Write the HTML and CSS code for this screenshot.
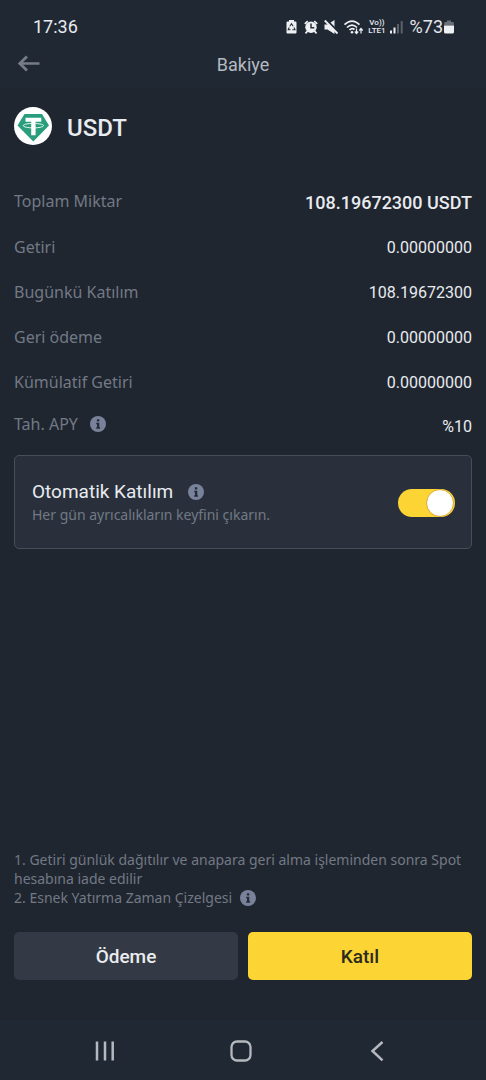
FILE: index.html
```html
<!DOCTYPE html>
<html lang="tr">
<head>
<meta charset="utf-8">
<meta name="viewport" content="width=device-width, initial-scale=1">
<title>Bakiye</title>
<link rel="stylesheet" href="styles.css">
</head>
<body>
<svg class="defs" width="0" height="0" aria-hidden="true">
  <symbol id="info" viewBox="0 0 16 16">
    <circle cx="8" cy="8" r="8" fill="#78829a"/>
    <path d="M6.900 3.300h2.400v2.200H6.900zM6.200 6.800h3.100v4.500h.8v1.500H6.200v-1.500h.8V8.200h-.8z" fill="#252c37"/>
  </symbol>
</svg>
<div class="screen">
  <div class="status">
    <span class="clock">17:36</span>
    <div class="indicators">
      <svg width="80" height="18" viewBox="0 0 80 18" aria-hidden="true">
        <path d="M4 2h5v1.500h1.500a1 1 0 0 1 1 1v10a1 1 0 0 1-1 1h-8a1 1 0 0 1-1-1v-10a1 1 0 0 1 1-1H4z" fill="#eef0f3"/>
        <path d="M4.800 8.200 6.500 5.800 8.200 8.200M9 9.500l1 2.300H7.300M5.500 11.800H3.200l1-2.300" fill="none" stroke="#28303b" stroke-width="1.100"/>
        <path d="M19.800 5.800 22.800 3.100M29.200 3.100l3 2.700M22.500 13l-2 2.300M29.500 13l2 2.300" fill="none" stroke="#eef0f3" stroke-width="1.800"/>
        <circle cx="26" cy="9.200" r="5.700" fill="#eef0f3"/>
        <path d="M26 5.500V9.800H29.300" fill="none" stroke="#28303b" stroke-width="1.500"/>
        <path d="M39.500 6.500h3L49.500 2v14l-7-4.500h-3z" fill="#eef0f3"/>
        <path d="M41 1.500 54 14.500" stroke="#202833" stroke-width="2"/>
        <path d="M39.800 2.500 52.500 15.500" stroke="#eef0f3" stroke-width="1.800"/>
        <g fill="none" stroke="#eef0f3" stroke-width="1.700">
          <path d="M59.500 6.700Q67 -.5 74.500 6.700M62 9.500Q67 4.700 72 9.500M64.500 12Q67 9.500 69.500 11.500"/>
          <path d="M71.500 10.500v5M69.800 13.500l1.700 2 1.700-2M76 15.500v-5M74.300 12.500l1.700-2 1.700 2" stroke-width="1.200"/>
        </g>
        <circle cx="67" cy="14.300" r="1.300" fill="#eef0f3"/>
      </svg>
      <span class="lte"><span>Vo))</span><span>LTE1</span></span>
      <svg width="13" height="18" viewBox="0 0 13 18" aria-hidden="true">
        <path d="M0 12.500h2v3H0zM3.500 9.500h2v6h-2z" fill="#eef0f3"/>
        <path d="M7 6h2v9.500H7zM10.700 3h2v12.500h-2z" fill="#5a616b"/>
      </svg>
      <span class="percent">%73</span>
      <svg width="10" height="18" viewBox="0 0 10 18" aria-hidden="true">
        <path d="M3 2.500h4V4h1.800a1 1 0 0 1 1 1v2.500H.2V5a1 1 0 0 1 1-1H3z" fill="#69707a"/>
        <path d="M0 7.500h10V14a1.500 1.500 0 0 1-1.500 1.500h-7A1.500 1.500 0 0 1 0 14z" fill="#eef0f3"/>
      </svg>
    </div>
  </div>
  <header class="header">
    <button class="back" type="button" aria-label="Geri">
      <svg width="22" height="18" viewBox="0 0 22 18"><path d="M21.500 8.500H2M9 1.500 1.800 8.500l7.200 7" fill="none" stroke="#777c86" stroke-width="2.700"/></svg>
    </button>
    <h1>Bakiye</h1>
  </header>
  <main class="main">
    <div class="coin">
      <svg width="38" height="38" viewBox="0 0 38 38" aria-hidden="true">
        <circle cx="19" cy="19" r="19" fill="#fff"/>
        <path d="M10.500 7h17.500L35 18.500 19.300 34.500 3.500 18.500z" fill="#2a9d7c"/>
        <path d="M11.500 10.800h15.800v4h-5.700v13.400h-4.400V14.800h-5.700z" fill="#fff"/>
        <path d="M17 16.500c-4.500.2-7.700 1-7.700 2.100 0 1.300 4.500 2.300 10.100 2.300s10.100-1 10.100-2.300c0-1.100-3.400-1.900-7.900-2.100" fill="none" stroke="#fff" stroke-width=".9"/>
      </svg>
      <h2>USDT</h2>
    </div>
    <dl class="rows">
      <div class="row total"><dt>Toplam Miktar</dt><dd>108.19672300 USDT</dd></div>
      <div class="row"><dt>Getiri</dt><dd>0.00000000</dd></div>
      <div class="row"><dt>Bugünkü Katılım</dt><dd>108.19672300</dd></div>
      <div class="row"><dt>Geri ödeme</dt><dd>0.00000000</dd></div>
      <div class="row"><dt>Kümülatif Getiri</dt><dd>0.00000000</dd></div>
      <div class="row apy"><dt>Tah. APY <svg class="info" aria-hidden="true"><use href="#info"/></svg></dt><dd>%10</dd></div>
    </dl>
    <section class="card">
      <div class="card-text">
        <label class="card-title" for="auto">Otomatik Katılım <svg class="info" aria-hidden="true"><use href="#info"/></svg></label>
        <p>Her gün ayrıcalıkların keyfini çıkarın.</p>
      </div>
      <input class="toggle" id="auto" type="checkbox" role="switch" checked>
    </section>
    <div class="notes">
      <p>1. Getiri günlük dağıtılır ve anapara geri alma işleminden sonra Spot hesabına iade edilir</p>
      <p class="note-info">2. Esnek Yatırma Zaman Çizelgesi <svg class="info" aria-hidden="true"><use href="#info"/></svg></p>
    </div>
    <div class="actions">
      <button class="secondary" type="button">Ödeme</button>
      <button class="primary" type="button">Katıl</button>
    </div>
  </main>
  <nav class="nav">
    <button type="button" aria-label="Son uygulamalar"><svg width="22" height="22" viewBox="0 0 22 22"><path d="M3 1.500v19M11 1.500v19M18.700 1.500v19" stroke="#b5b9bf" stroke-width="2.500"/></svg></button>
    <button type="button" aria-label="Ana ekran"><svg width="22" height="22" viewBox="0 0 22 22"><rect x="1.500" y="1.500" width="19" height="19" rx="5.500" fill="none" stroke="#b5b9bf" stroke-width="2.300"/></svg></button>
    <button type="button" aria-label="Geri dön"><svg width="22" height="22" viewBox="0 0 22 22"><path d="M16.500 2 6.500 11l10 9.300" fill="none" stroke="#b5b9bf" stroke-width="2.500"/></svg></button>
  </nav>
</div>
</body>
</html>
```
FILE: styles.css
```css
* {
  box-sizing: border-box;
}

body,
h1,
h2,
p,
dl,
dd {
  margin: 0;
}

body {
  background: #20262f;
  color: #e8ebf0;
  font-family: Roboto, "Noto Sans", sans-serif;
  font-size: 16px;
}

button {
  border: 0;
  padding: 0;
  background: none;
  font: inherit;
}

svg {
  display: block;
  flex: none;
}

.defs {
  position: absolute;
}

.screen {
  display: flex;
  flex-direction: column;
  min-height: 100vh;
}

.status {
  display: flex;
  justify-content: space-between;
  align-items: center;
  padding: 18px 32px 0 33px;
  background: #202833;
}

.clock {
  font-size: 18px;
  line-height: 18px;
}

.indicators {
  display: flex;
  align-items: center;
}

.lte {
  display: flex;
  flex-direction: column;
  align-items: center;
  margin: 0 4px 0 3px;
  font-size: 8px;
  font-weight: 500;
  line-height: 8px;
}

.percent {
  margin: 0 1px 0 7px;
  color: #e4e6ea;
  font-size: 18px;
  line-height: 18px;
}

.header {
  display: grid;
  grid-template-columns: 1fr auto 1fr;
  align-items: center;
  height: 52px;
  padding: 4px 18px 0;
  background: #202833;
}

.back {
  justify-self: start;
}

.header h1 {
  color: #b5b9c1;
  font-size: 18px;
  font-weight: 400;
}

.main {
  display: flex;
  flex: 1;
  flex-direction: column;
  padding: 19px 14px 40px;
}

.coin {
  display: flex;
  align-items: center;
  gap: 15px;
}

.coin h2 {
  padding-top: 3px;
  font-size: 24px;
  font-weight: 500;
  line-height: 28px;
}

.rows {
  padding-top: 35px;
}

.row {
  display: flex;
  align-items: center;
  justify-content: space-between;
  height: 45px;
}

.apy {
  height: 42px;
}

.row dt {
  display: flex;
  align-items: center;
  gap: 12px;
  padding-bottom: 2px;
  color: #727986;
  font-family: "Noto Sans", sans-serif;
  font-size: 16px;
}

.row.apy dt,
.row.total dt {
  padding-bottom: 4px;
}

.row dd {
  font-size: 16px;
}

.total dd {
  font-size: 18px;
  font-weight: 500;
}

.info {
  width: 16px;
  height: 16px;
}

.card {
  display: flex;
  align-items: center;
  justify-content: space-between;
  margin-top: 8px;
  padding: 24px 16px 22px 17px;
  border: 1px solid #464e5a;
  border-radius: 5px;
  background: #29303b;
}

.card-title {
  display: flex;
  align-items: center;
  gap: 15px;
  font-size: 19px;
  line-height: 24px;
}

.card p {
  color: #727986;
  font-family: "Noto Sans", sans-serif;
  font-size: 14px;
  line-height: 22px;
}

.toggle {
  display: flex;
  align-items: center;
  justify-content: flex-end;
  width: 57px;
  height: 28px;
  margin: 0;
  padding: 1px;
  border-radius: 14px;
  background: #fcd535;
  appearance: none;
}

.toggle::before {
  width: 26px;
  height: 26px;
  border: 1px solid #dda92c;
  border-radius: 50%;
  background: #fff;
  content: "";
}

.toggle:not(:checked) {
  justify-content: flex-start;
  background: #5e6673;
}

.notes {
  margin-top: auto;
  color: #727986;
  font-family: "Noto Sans", sans-serif;
  font-size: 14px;
  line-height: 19px;
}

.note-info {
  display: flex;
  align-items: center;
  gap: 8px;
}

.actions {
  display: grid;
  grid-template-columns: 1fr 1fr;
  gap: 10px;
  margin-top: 25px;
}

.actions button {
  height: 48px;
  padding-top: 1px;
  border-radius: 5px;
  font-size: 19px;
  font-weight: 500;
}

.secondary {
  background: #333a45;
  color: #eaecef;
}

.primary {
  background: #fcd535;
  color: #2c2b20;
}

.nav {
  display: flex;
  align-items: center;
  justify-content: space-between;
  height: 60px;
  padding: 2px 98px 0 94px;
  background: #202833;
}
```
